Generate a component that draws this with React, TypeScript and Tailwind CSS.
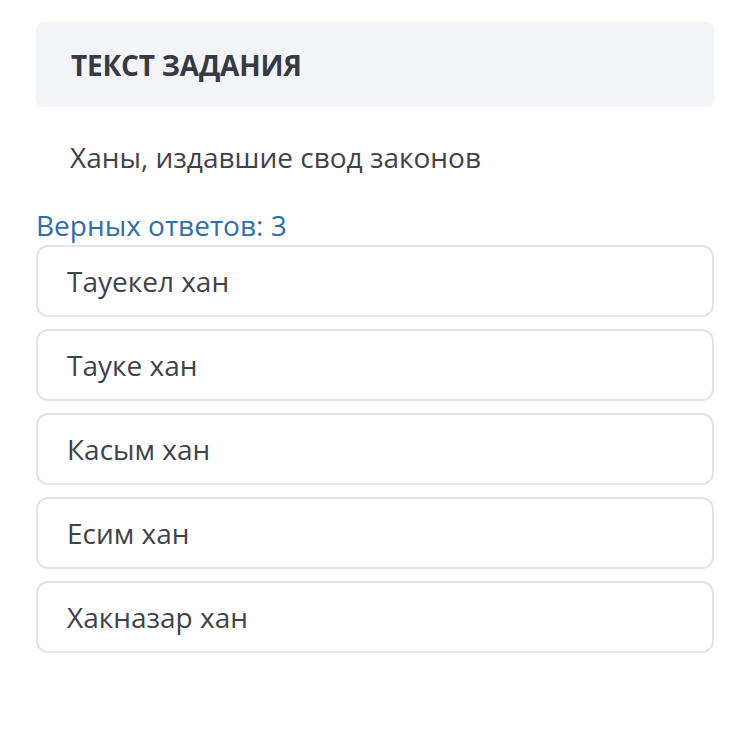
const options = ['Тауекел хан', 'Тауке хан', 'Касым хан', 'Есим хан', 'Хакназар хан']

export default function App() {
  return (
    <main
      className="w-[750px] h-[750px] bg-white px-[36px] pt-[22px]"
      style={{ fontFamily: '"Open Sans", "Noto Sans", sans-serif' }}
    >
      <div className="h-[85px] rounded-lg bg-[#f3f4f8] flex items-center px-[35px]">
        <h2 className="text-[28px] font-bold text-[#363a44] tracking-[-0.2px]">ТЕКСТ ЗАДАНИЯ</h2>
      </div>
      <p className="mt-[30px] pl-[34px] text-[28px] leading-[40px] text-[#3f4249]">
        Ханы, издавшие свод законов
      </p>
      <div className="mt-[32px] text-[28px] leading-[32px] text-[#2f6ea8]">Верных ответов: 3</div>
      <div className="mt-[4px] flex flex-col gap-[12px]">
        {options.map((o) => (
          <div
            key={o}
            className="h-[72px] rounded-xl border-2 border-[#e3e3e3] flex items-center px-[29px] text-[28px] text-[#3f4249]"
          >
            {o}
          </div>
        ))}
      </div>
    </main>
  )
}
